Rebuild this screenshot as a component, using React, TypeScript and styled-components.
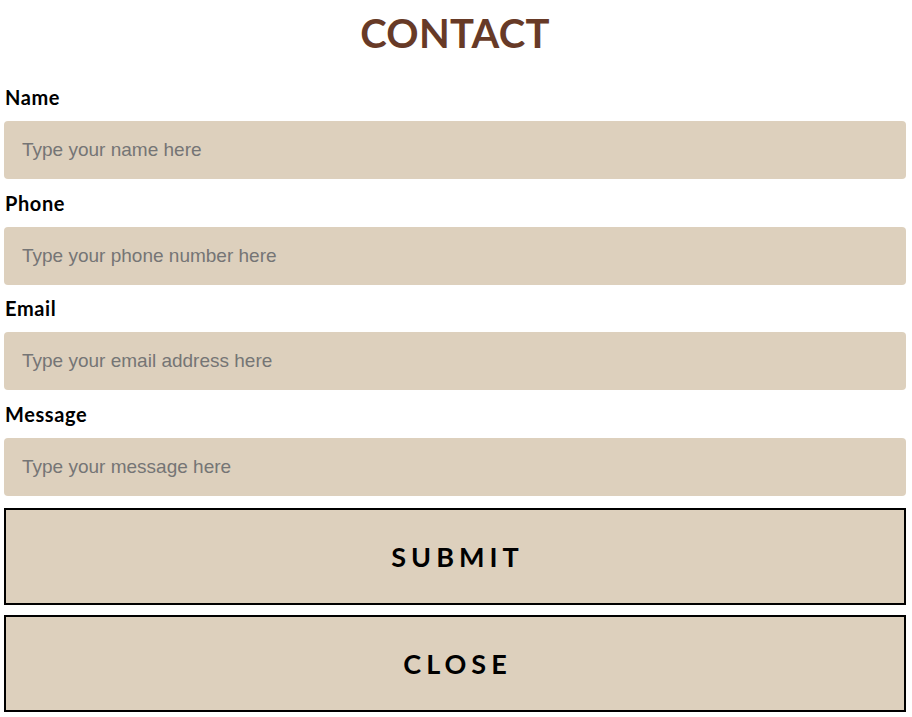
import React from "react";
import styled, { createGlobalStyle } from "styled-components";

const Global = createGlobalStyle`
  html, body { margin: 0; padding: 0; background: #ffffff; }
  body { font-family: "Lato", "Liberation Sans", sans-serif; }
`;

const Page = styled.form`
  padding: 0 6px 0 4px;
  display: flex;
  flex-direction: column;
`;

const Title = styled.h1`
  margin: 0;
  height: 85px;
  padding-top: 8px;
  box-sizing: border-box;
  text-align: center;
  font-family: "Lato", "Liberation Sans", sans-serif;
  font-weight: 700;
  font-size: 40px;
  line-height: 50px;
  color: #673a27;
  letter-spacing: 0.3px;
`;

const Field = styled.div`
  display: flex;
  flex-direction: column;
`;

const Label = styled.label`
  display: block;
  height: 36px;
  box-sizing: border-box;
  padding-left: 1px;
  font-family: "Lato", "Liberation Sans", sans-serif;
  font-weight: 700;
  font-size: 20px;
  line-height: 24px;
  letter-spacing: 0.6px;
  color: #000;
`;

const Input = styled.input<{ $gap: number }>`
  display: block;
  box-sizing: border-box;
  width: 100%;
  height: 58px;
  margin-bottom: ${(p) => p.$gap}px;
  border: none;
  border-radius: 4px;
  background: #ddd0bd;
  padding: 0 18px;
  font-family: "Liberation Sans", Arial, sans-serif;
  font-size: 19px;
  color: #333;
  outline: none;
  &::placeholder { color: #757575; }
`;

const Button = styled.button<{ $gap?: number }>`
  display: block;
  box-sizing: border-box;
  width: 100%;
  height: 97px;
  margin-bottom: ${(p) => p.$gap ?? 0}px;
  border: 2px solid #000;
  border-radius: 0;
  background: #ddd0bd;
  font-family: "Lato", "Liberation Sans", sans-serif;
  font-weight: 700;
  font-size: 27px;
  letter-spacing: 5px;
  text-indent: 5px;
  color: #000;
  cursor: pointer;
`;

const fields = [
  { label: "Name", ph: "Type your name here" },
  { label: "Phone", ph: "Type your phone number here" },
  { label: "Email", ph: "Type your email address here" },
  { label: "Message", ph: "Type your message here" },
];

export default function App() {
  return (
    <>
      <Global />
      <Page onSubmit={(e) => e.preventDefault()}>
        <Title>CONTACT</Title>
        {fields.map((f, i) => (
          <Field key={f.label}>
            <Label>{f.label}</Label>
            <Input placeholder={f.ph} $gap={i === 1 ? 11 : 12} />
          </Field>
        ))}
        <Button type="submit" $gap={10}>SUBMIT</Button>
        <Button type="button">CLOSE</Button>
      </Page>
    </>
  );
}
